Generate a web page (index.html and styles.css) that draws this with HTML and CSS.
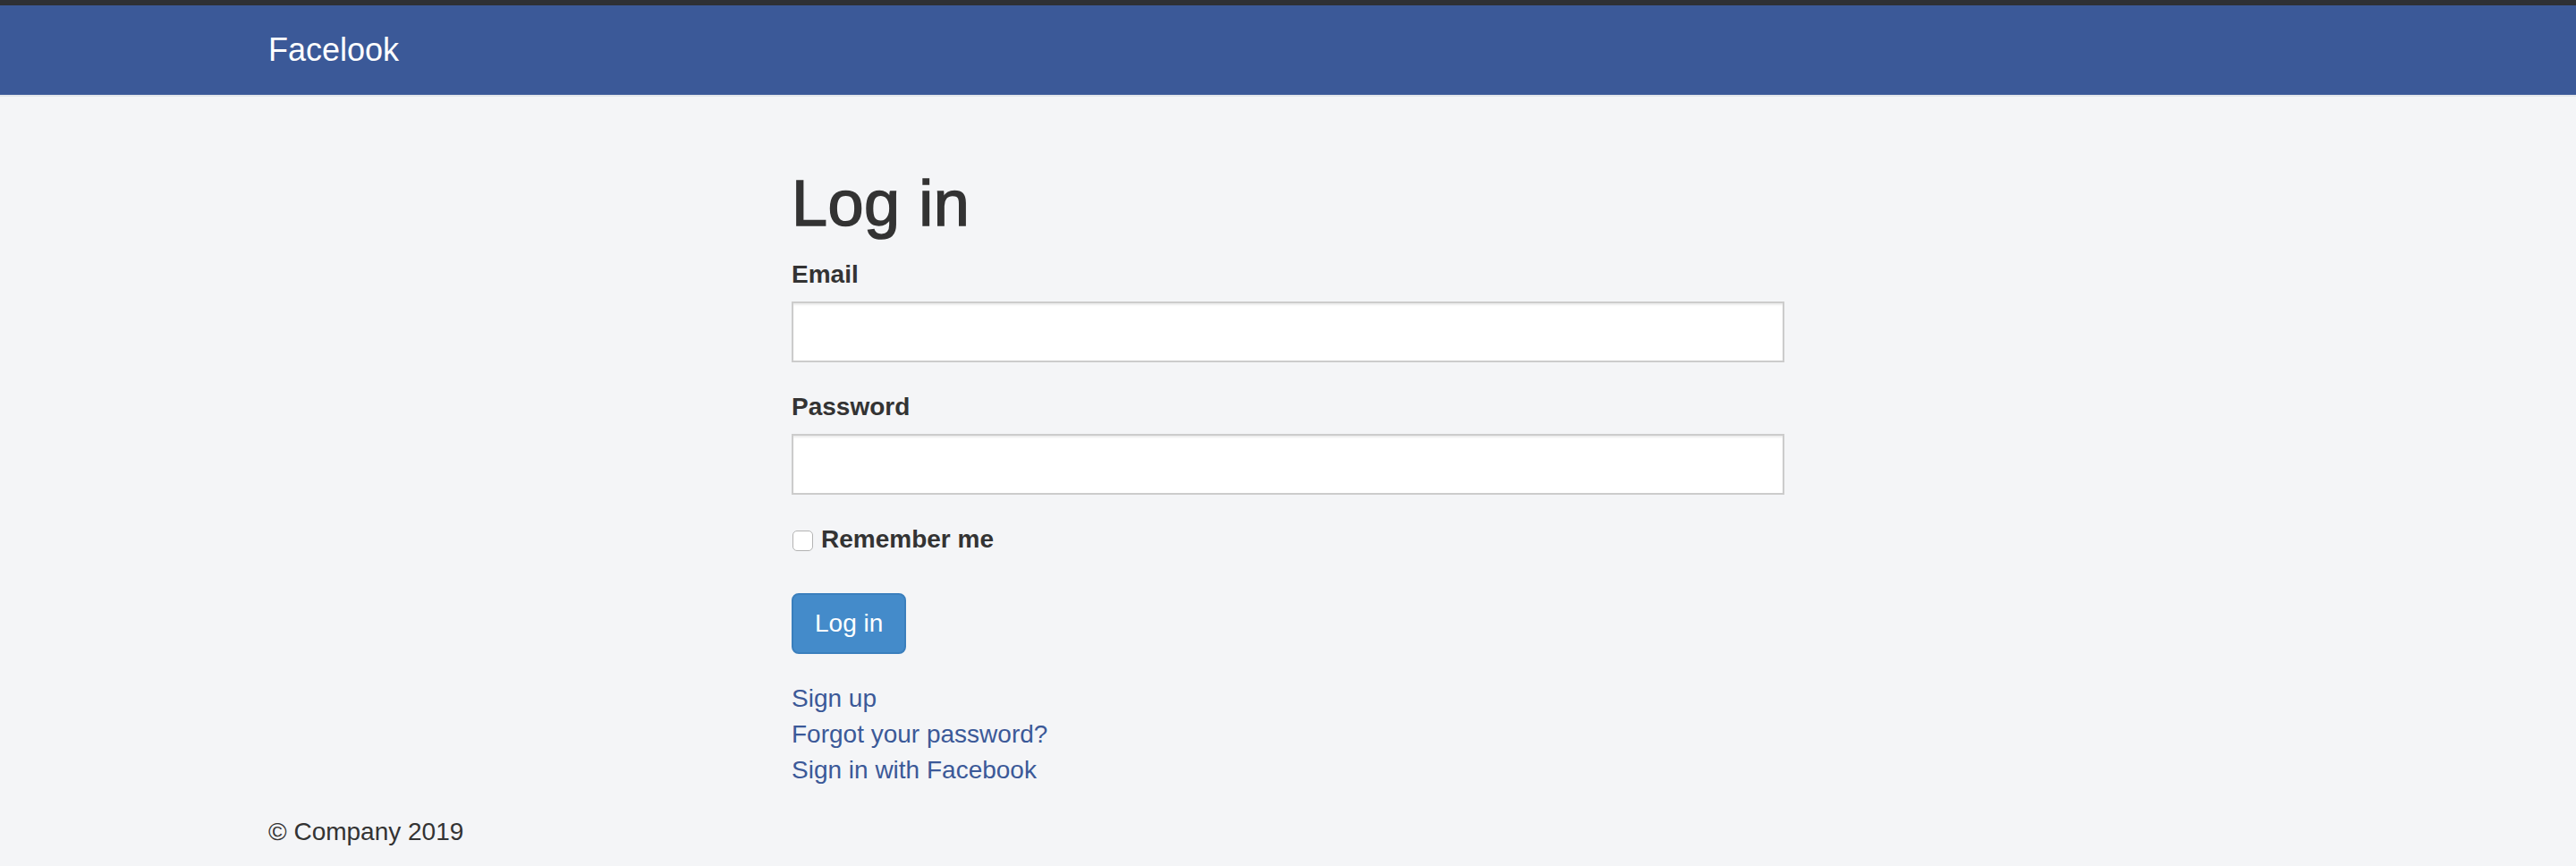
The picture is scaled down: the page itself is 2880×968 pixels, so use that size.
FILE: index.html
```html
<!DOCTYPE html>
<html lang="en">
<head>
<meta charset="utf-8">
<title>Log in - Facelook</title>
<link rel="stylesheet" href="styles.css">
</head>
<body>
<div class="topbar"></div>
<nav class="navbar">
  <div class="container">
    <a class="brand" href="#">Facelook</a>
  </div>
</nav>
<div class="container">
  <div class="grid">
    <div class="login">
      <h1 class="title">Log in</h1>
      <form class="form">
        <div class="form-group">
          <label class="label" for="email">Email</label>
          <input class="form-control" id="email" type="email">
        </div>
        <div class="form-group">
          <label class="label" for="password">Password</label>
          <input class="form-control" id="password" type="password">
        </div>
        <div class="check-row">
          <input class="checkbox" id="remember" type="checkbox">
          <label class="label label-inline" for="remember">Remember me</label>
        </div>
        <div class="form-group">
          <button class="btn" type="button">Log in</button>
        </div>
      </form>
      <div class="links">
        <a class="link" href="#">Sign up</a>
        <a class="link" href="#">Forgot your password?</a>
        <a class="link" href="#">Sign in with Facebook</a>
      </div>
    </div>
  </div>
  <footer class="footer">
    <p class="footer-text">© Company 2019</p>
  </footer>
</div>
</body>
</html>
```
FILE: styles.css
```css
* {
  box-sizing: border-box;
}

html, body {
  margin: 0;
  padding: 0;
}

body {
  background: #f4f5f7;
  font-family: "Liberation Sans", Arial, Helvetica, sans-serif;
  font-size: 28px;
  line-height: 40px;
  color: #333333;
}

.topbar {
  height: 6px;
  background: #2e3034;
}

.navbar {
  height: 102px;
  background: #3b5998;
  border-bottom: 2px solid #e2e5ea;
  margin-bottom: 40px;
}

.container {
  width: 2340px;
  margin: 0 auto;
  padding: 0 30px;
}

.brand {
  display: inline-block;
  padding: 30px 0;
  font-size: 36px;
  line-height: 40px;
  color: #ffffff;
  text-decoration: none;
}

.grid {
  display: grid;
  grid-template-columns: repeat(12, 1fr);
  column-gap: 60px;
}

.login {
  grid-column: 4 / span 6;
}

.title {
  margin: 40px 0 20px;
  font-size: 72px;
  line-height: 79px;
  font-weight: 500;
  letter-spacing: 0.5px;
  color: #333333;
  -webkit-text-stroke: 1.5px #333333;
}

.form {
  margin: 0;
}

.form-group {
  margin-bottom: 30px;
}

.label {
  display: inline-block;
  margin-bottom: 10px;
  font-weight: bold;
}

.label-inline {
  margin-bottom: 0;
}

.form-control {
  display: block;
  width: 100%;
  height: 68px;
  padding: 12px 24px;
  font-family: inherit;
  font-size: 28px;
  color: #555555;
  background: #ffffff;
  border: 2px solid #cccccc;
  border-radius: 0;
  box-shadow: inset 0 2px 2px rgba(0, 0, 0, 0.075);
  outline: none;
}

.check-row {
  display: flex;
  align-items: center;
  gap: 9px;
  height: 40px;
  margin-bottom: 40px;
}

.checkbox {
  appearance: none;
  -webkit-appearance: none;
  width: 23px;
  height: 23px;
  margin: 3px 0 0 1px;
  background: #ffffff;
  border: 1px solid #b3b3b3;
  border-radius: 5px;
}

.btn {
  display: inline-block;
  padding: 12px 24px;
  font-family: inherit;
  font-size: 28px;
  line-height: 40px;
  color: #ffffff;
  background: #448bca;
  border: 2px solid #3a7fbd;
  border-radius: 8px;
  cursor: pointer;
}

.links {
  margin-bottom: 29px;
}

.link {
  display: block;
  color: #3b5998;
  text-decoration: none;
}

.footer-text {
  margin: 0;
}
```
